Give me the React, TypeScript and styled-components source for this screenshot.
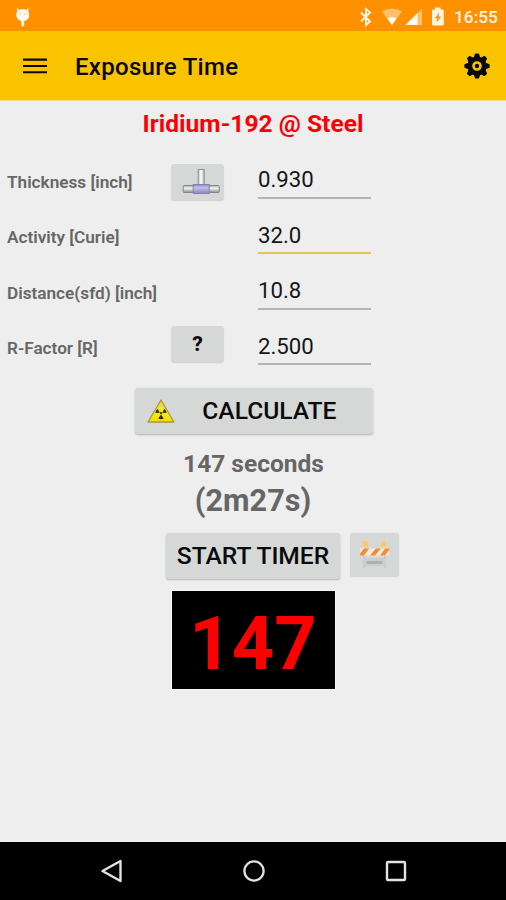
import React from "react";
import styled, { createGlobalStyle } from "styled-components";

const GlobalStyle = createGlobalStyle`
  *, *::before, *::after { box-sizing: border-box; }
  body { margin: 0; background: #eeeeee; font-family: Roboto, sans-serif; }
  svg { display: block; flex: none; }
`;

const Screen = styled.div`
  width: 506px;
  height: 900px;
  display: flex;
  flex-direction: column;
  overflow: hidden;
  background: #eeeeee;
  color: #080808;
`;

const StatusBar = styled.header`
  height: 31px;
  flex: none;
  display: flex;
  align-items: center;
  justify-content: space-between;
  padding: 2px 8px 0 15px;
  background: #ff9000;
  color: #fff3e2;
`;

const StatusIcons = styled.div`
  display: flex;
  align-items: center;
`;

const Gap = styled.span<{ $w: number }>`
  width: ${(p) => p.$w}px;
`;

const Clock = styled.span`
  width: 44px;
  margin-left: 9px;
  font-size: 17.3px;
  line-height: 20px;
  font-weight: 500;
  white-space: nowrap;
`;

const AppBar = styled.div`
  height: 69px;
  flex: none;
  display: flex;
  align-items: center;
  padding: 0 15px 0 22px;
  background: #f9c300;
`;

const Title = styled.h1`
  flex: 1;
  margin: 3px 0 0 27px;
  font-size: 24px;
  line-height: 28px;
  font-weight: 500;
  letter-spacing: 0.3px;
`;

const IconButton = styled.button`
  display: flex;
  padding: 0;
  border: 0;
  background: none;
  color: #080808;
`;

const Content = styled.main`
  flex: 1;
  display: flex;
  flex-direction: column;
  align-items: center;
  border-top: 1px solid #f1dc92;
`;

const Source = styled.h2`
  margin: 8px 0 0;
  font-size: 24.6px;
  line-height: 30px;
  font-weight: 700;
  color: #fb0006;
`;

const Form = styled.div`
  align-self: stretch;
  margin-top: 15px;
  padding-left: 7px;
`;

const Row = styled.div`
  display: grid;
  grid-template-columns: 164px 87px 113px;
  height: 55.5px;
  align-items: center;
`;

const Label = styled.label`
  font-size: 17.2px;
  line-height: 20px;
  font-weight: 600;
  color: #666666;
  white-space: nowrap;
`;

const Value = styled.input<{ $focused?: boolean }>`
  width: 113px;
  height: 34px;
  margin-top: 0;
  padding: 0 0 3px;
  border: 0;
  border-bottom: ${(p) => (p.$focused ? "2px solid #ecc24a" : "2px solid #b4b4b4")};
  border-radius: 0;
  outline: 0;
  background: none;
  color: #161616;
  font: 400 22.2px/28px Roboto, sans-serif;
`;

const RaisedButton = styled.button`
  display: flex;
  align-items: center;
  justify-content: center;
  padding: 0;
  border: 0;
  border-radius: 3px;
  background: #d6d8d7;
  box-shadow: 0 1px 2px rgba(0, 0, 0, 0.25);
  color: #0a0a0a;
  font: 500 24.6px/28px Roboto, sans-serif;
  white-space: nowrap;
`;

const SmallButton = styled(RaisedButton)<{ $raise?: number }>`
  width: 53px;
  height: 36px;
  margin-bottom: ${(p) => p.$raise ?? 0}px;
  box-shadow: 0 1px 1px rgba(0, 0, 0, 0.12);
  font-size: 21px;
  font-weight: 800;
`;

const MaterialButton = styled(SmallButton)`
  padding-left: 7px;
`;

const CalculateButton = styled(RaisedButton)`
  width: 238px;
  height: 46px;
  margin: 12px 0 0 1px;
  padding: 0 36px 0 11px;
  justify-content: space-between;
`;

const Seconds = styled.div`
  margin: 15px 0 0 1px;
  font-size: 24.5px;
  line-height: 30px;
  font-weight: 700;
  color: #666666;
`;

const Duration = styled.div`
  margin-top: 4px;
  font-size: 30.6px;
  line-height: 36px;
  font-weight: 700;
  color: #666666;
`;

const TimerRow = styled.div`
  display: flex;
  gap: 10px;
  margin: 14px 0 0 59px;
`;

const TimerButton = styled(RaisedButton)`
  width: 174px;
  height: 46px;
`;

const BarrierButton = styled(RaisedButton)`
  width: 49px;
  height: 44px;
  box-shadow: 0 0 1px rgba(0, 0, 0, 0.12);
`;

const Countdown = styled.div`
  width: 163px;
  height: 98px;
  margin-top: 12px;
  padding-top: 7px;
  display: flex;
  align-items: center;
  justify-content: center;
  background: #000;
  box-shadow: 0 0 0 1px #f8f8f8;
  color: #ff0000;
  font-size: 74px;
  line-height: 84px;
  font-weight: 700;
`;

const NavBar = styled.nav`
  height: 58px;
  flex: none;
  display: flex;
  align-items: center;
  justify-content: space-between;
  padding: 0 98px 0 100px;
  background: #000;
`;

const DebugIcon = () => (
  <svg width="16" height="20" viewBox="0 0 16 20">
    <path
      d="M2 0.5 4 3Q8 1 11.5 3L13.5 0.5 13.4 5Q15 7 14 10Q13 13 9.2 14V18Q8.5 20 7 19.5L6.4 18V14Q2 12.5 1.3 9Q1 6.5 2 5Z"
      fill="#fff8ed"
    />
    <path d="M4 6.7 6 7.2M9.5 7.2l2-.5" stroke="#ffb65b" strokeWidth="0.8" />
  </svg>
);

const BluetoothIcon = () => (
  <svg width="14" height="20" viewBox="0 0 14 20">
    <path d="M2 5.5 11 14.5 7 18V2L11 5.5 2 14.5" fill="none" stroke="currentColor" strokeWidth="2" />
  </svg>
);

const WifiIcon = () => (
  <svg width="22" height="20" viewBox="0 0 22 20">
    <path d="M1 4.5Q11-1.5 21 4.5L11 18Z" fill="#ffc06a" />
    <path d="M6.3 11.5Q11 8.5 15.7 11.5L11 18Z" fill="#fffaf0" />
  </svg>
);

const SignalIcon = () => (
  <svg width="18" height="20" viewBox="0 0 18 20">
    <path d="M0.5 18 17 1.5V18Z" fill="#ffc06a" />
    <path d="M0.5 18 12.5 6V18Z" fill="#fffaf0" />
  </svg>
);

const BatteryIcon = () => (
  <svg width="14" height="20" viewBox="0 0 14 20">
    <path
      d="M4 .5H9.5V2.5H11.5Q12.8 2.5 12.8 4V17Q12.8 18.5 11.5 18.5H2.2Q1 18.5 1 17V4Q1 2.5 2.2 2.5H4Z"
      fill="currentColor"
    />
    <path d="M8.3 5.5 3.8 11.2H6.3L5.5 15.8 10 9.8H7.5Z" fill="#ff9000" />
  </svg>
);

const MenuIcon = () => (
  <svg width="26" height="18" viewBox="0 0 26 18">
    <path d="M1 2.6H25M1 9H25M1 15.2H25" stroke="currentColor" strokeWidth="2.1" />
  </svg>
);

const GEAR_TEETH = [0, 45, 90, 135, 180, 225, 270, 315];

const GearIcon = () => (
  <svg width="28" height="28" viewBox="-14 -14 28 28">
    <circle r="7.2" fill="none" stroke="currentColor" strokeWidth="4.8" />
    <circle r="2.2" fill="currentColor" />
    {GEAR_TEETH.map((angle) => (
      <path
        key={angle}
        d="M-3.2-8.6-2.1-11.9Q-1.9-12.6-1.2-12.6H1.2Q1.9-12.6 2.1-11.9L3.2-8.6Z"
        fill="currentColor"
        transform={`rotate(${angle})`}
      />
    ))}
  </svg>
);

const PipeIcon = () => (
  <svg width="40" height="28" viewBox="0 0 40 28">
    <defs>
      <linearGradient id="stem" x2="1">
        <stop stopColor="#bfc0c0" />
        <stop offset=".5" stopColor="#ffffff" />
        <stop offset="1" stopColor="#b0b1b1" />
      </linearGradient>
      <linearGradient id="pipe" x2="0" y2="1">
        <stop stopColor="#aaaaaa" />
        <stop offset=".4" stopColor="#f3f4f3" />
        <stop offset="1" stopColor="#888988" />
      </linearGradient>
      <linearGradient id="sleeve" x2="0" y2="1">
        <stop stopColor="#8f88bb" />
        <stop offset=".35" stopColor="#c5bfeb" />
        <stop offset="1" stopColor="#8b83bd" />
      </linearGradient>
    </defs>
    <rect x="17.2" y="1.5" width="6" height="17" fill="url(#stem)" stroke="#929393" />
    <rect x="2.2" y="17.5" width="36" height="7" rx="1" fill="url(#pipe)" stroke="#858686" />
    <rect x="12.2" y="16.5" width="16" height="9" fill="url(#sleeve)" stroke="#8780ae" />
  </svg>
);

const RadiationIcon = () => (
  <svg width="30" height="26" viewBox="0 0 30 26">
    <defs>
      <linearGradient id="warning" x2="0" y2="1">
        <stop stopColor="#d9ce69" />
        <stop offset=".5" stopColor="#f4eb28" />
        <stop offset="1" stopColor="#f1dd00" />
      </linearGradient>
    </defs>
    <path d="M15 2 28 24H2Z" fill="url(#warning)" stroke="#a99a38" strokeWidth="1.3" strokeLinejoin="round" />
    <path d="M13.8 14.7 9.4 15Q9.5 12.2 11.8 11ZM16.2 14.7 20.6 15Q20.5 12.2 18.2 11ZM15 16.5 17.7 20.6Q15 22 12.3 20.6Z" fill="#34310b" />
    <circle cx="15" cy="15.2" r="1.1" fill="#34310b" />
  </svg>
);

const BarrierIcon = () => (
  <svg width="32" height="30" viewBox="0 0 32 30">
    <circle cx="6.5" cy="4" r="2.9" fill="#ffc95e" />
    <circle cx="24.5" cy="4" r="2.9" fill="#ffc95e" />
    <path d="M5 16V28M26 16V28" stroke="#c8caca" strokeWidth="2" />
    <path d="M1 8.5H30V15.5H1Z" fill="#f3e9df" />
    <path d="M1 15.5V13.5L5 8.5H10L5 15.5ZM11 15.5 17 8.5H22L16 15.5ZM21 15.5 26 8.5H31L26 15.5Z" fill="#f78b32" />
    <rect x="4" y="18" width="23" height="8" rx="1" fill="#cccece" />
    <rect x="7.5" y="21" width="16" height="3" rx="1" fill="#aeb0b0" />
  </svg>
);

const BackIcon = () => (
  <svg width="24" height="26" viewBox="0 0 24 26">
    <path d="M20.5 3V23L2.5 13Z" fill="none" stroke="#e3e3e3" strokeWidth="2.4" strokeLinejoin="round" />
  </svg>
);

const HomeIcon = () => (
  <svg width="24" height="24" viewBox="0 0 24 24">
    <circle cx="12" cy="12" r="9.6" fill="none" stroke="#e3e3e3" strokeWidth="2.3" />
  </svg>
);

const RecentIcon = () => (
  <svg width="24" height="24" viewBox="0 0 24 24">
    <rect x="3" y="3" width="18" height="18" rx="1" fill="none" stroke="#e3e3e3" strokeWidth="2.4" />
  </svg>
);

export default function App() {
  return (
    <>
      <GlobalStyle />
      <Screen>
        <StatusBar>
          <DebugIcon />
          <StatusIcons>
            <BluetoothIcon />
            <Gap $w={8} />
            <WifiIcon />
            <Gap $w={2} />
            <SignalIcon />
            <Gap $w={8} />
            <BatteryIcon />
            <Clock>16:55</Clock>
          </StatusIcons>
        </StatusBar>
        <AppBar>
          <IconButton aria-label="Menu">
            <MenuIcon />
          </IconButton>
          <Title>Exposure Time</Title>
          <IconButton aria-label="Settings">
            <GearIcon />
          </IconButton>
        </AppBar>
        <Content>
          <Source>Iridium-192 @ Steel</Source>
          <Form>
            <Row>
              <Label>Thickness [inch]</Label>
              <MaterialButton aria-label="Material">
                <PipeIcon />
              </MaterialButton>
              <Value defaultValue="0.930" />
            </Row>
            <Row>
              <Label>Activity [Curie]</Label>
              <span />
              <Value defaultValue="32.0" $focused />
            </Row>
            <Row>
              <Label>Distance(sfd) [inch]</Label>
              <span />
              <Value defaultValue="10.8" />
            </Row>
            <Row>
              <Label>R-Factor [R]</Label>
              <SmallButton $raise={8}>?</SmallButton>
              <Value defaultValue="2.500" />
            </Row>
          </Form>
          <CalculateButton>
            <RadiationIcon />
            CALCULATE
          </CalculateButton>
          <Seconds>147 seconds</Seconds>
          <Duration>(2m27s)</Duration>
          <TimerRow>
            <TimerButton>START TIMER</TimerButton>
            <BarrierButton aria-label="Barrier">
              <BarrierIcon />
            </BarrierButton>
          </TimerRow>
          <Countdown>147</Countdown>
        </Content>
        <NavBar>
          <BackIcon />
          <HomeIcon />
          <RecentIcon />
        </NavBar>
      </Screen>
    </>
  );
}
